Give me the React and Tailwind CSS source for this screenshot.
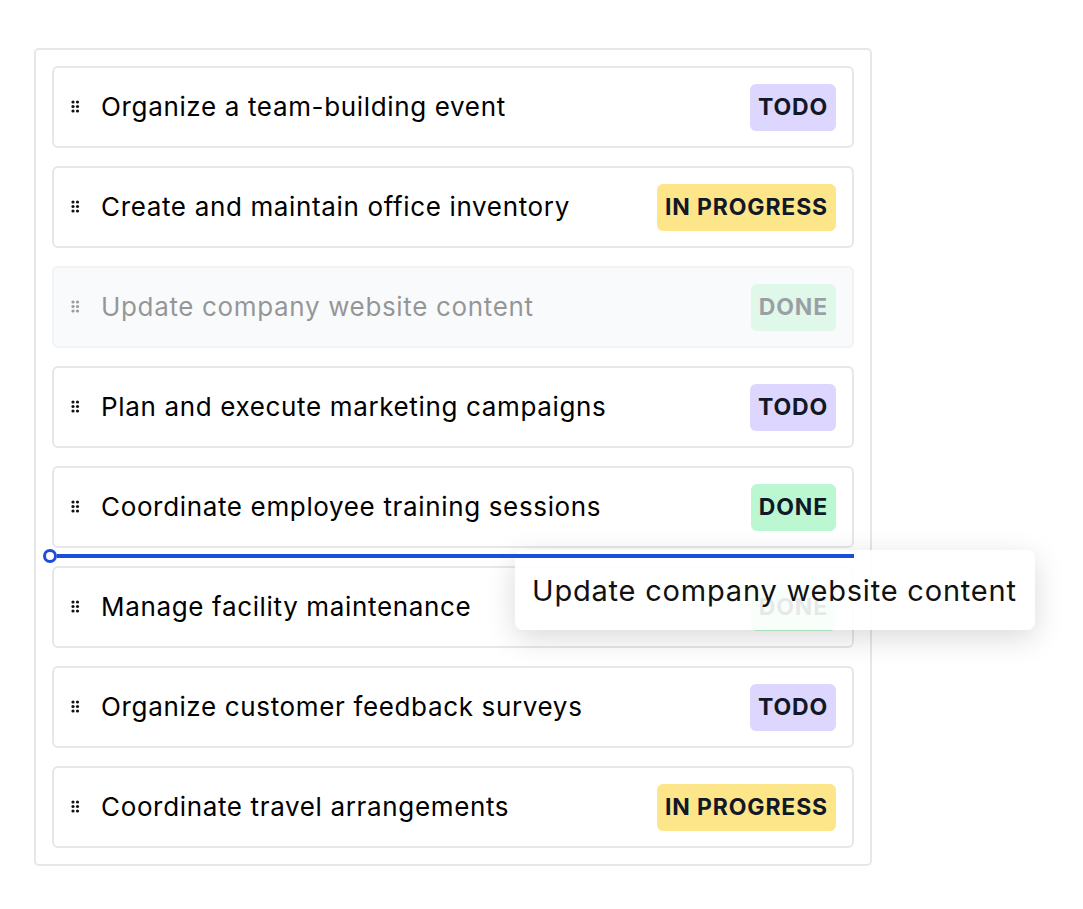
import React from "react";

const items = [
  { text: "Organize a team-building event", status: "TODO" },
  { text: "Create and maintain office inventory", status: "IN PROGRESS" },
  { text: "Update company website content", status: "DONE", ghost: true },
  { text: "Plan and execute marketing campaigns", status: "TODO" },
  { text: "Coordinate employee training sessions", status: "DONE" },
  { text: "Manage facility maintenance", status: "DONE", indicator: true },
  { text: "Organize customer feedback surveys", status: "TODO" },
  { text: "Coordinate travel arrangements", status: "IN PROGRESS" },
];

const badgeBg = {
  TODO: "bg-[#ddd6fe]",
  "IN PROGRESS": "bg-[#fde68a]",
  DONE: "bg-[#bbf7d0]",
};

function Handle() {
  return (
    <svg width="10" height="16" viewBox="0 0 10 16" className="shrink-0">
      {[2, 6.5].map((x) =>
        [3, 7.5, 12].map((y) => (
          <circle key={`${x}-${y}`} cx={x} cy={y} r="1.6" fill="#111" />
        ))
      )}
    </svg>
  );
}

function Item({ text, status, ghost, indicator }) {
  return (
    <div className="relative">
      {indicator && (
        <div className="absolute left-[-9px] right-0 top-[-17px] flex items-center h-[14px] z-10">
          <div className="w-[14px] h-[14px] rounded-full border-[3px] border-[#1d4ed8] bg-white shrink-0" />
          <div className="flex-1 h-[4px] bg-[#1d4ed8]" />
        </div>
      )}
      <div
        className={
          "flex items-center h-[82px] rounded-[6px] border-2 pl-[17px] pr-[16px] " +
          (ghost
            ? "bg-[#f9fafb] border-[#f1f2f4]"
            : "bg-white border-[#e5e7eb]")
        }
      >
        <div className={"flex items-center flex-1 " + (ghost ? "opacity-40" : "")}>
          <Handle />
          <span className="ml-[20px] text-[26px] tracking-[0.65px] text-black leading-none">{text}</span>
        </div>
        <span
          className={
            "h-[47px] flex items-center px-[8px] rounded-[6px] text-[23px] font-bold tracking-[0.85px] text-[#111827] " +
            badgeBg[status] +
            (ghost ? " opacity-40" : "")
          }
        >
          {status}
        </span>
      </div>
    </div>
  );
}

export default function App() {
  return (
    <div
      className="relative w-[1083px] h-[909px] bg-white pt-[48px] pl-[34px]"
      style={{ fontFamily: "Inter, 'Noto Sans', sans-serif" }}
    >
      <div className="w-[838px] border-2 border-[#e5e7eb] rounded-[5px] p-[16px] flex flex-col gap-[18px]">
        {items.map((it, i) => (
          <Item key={i} {...it} />
        ))}
      </div>
      <div className="absolute left-[515px] top-[550px] w-[520px] h-[80px] rounded-[8px] bg-white/90 shadow-[0_8px_30px_rgba(0,0,0,0.15)] flex items-center pl-[17px]">
        <span className="text-[29px] tracking-[0.8px] text-[#111] leading-none">Update company website content</span>
      </div>
    </div>
  );
}
